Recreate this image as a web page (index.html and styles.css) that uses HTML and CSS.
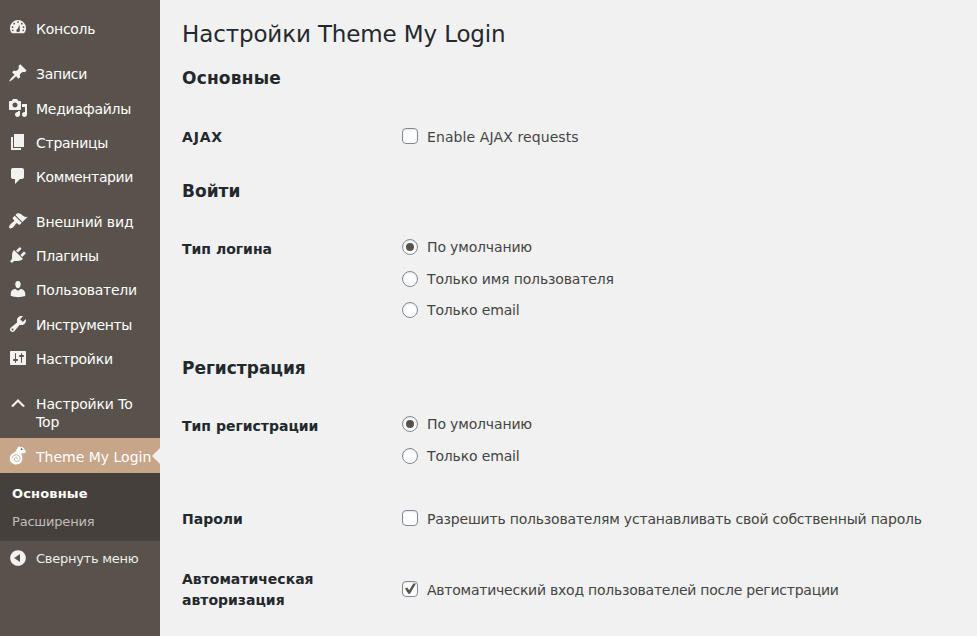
FILE: index.html
```html
<!DOCTYPE html>
<html lang="ru">
<head>
<meta charset="utf-8">
<title>Настройки Theme My Login</title>
<link rel="stylesheet" href="styles.css">
</head>
<body>
<div class="layout">
  <nav class="menu">
    <a class="item"><svg class="icon" viewBox="0 0 20 20"><path fill-rule="evenodd" d="M3.900 15.300h12.200A8 8 0 1 0 3.900 15.300zM10 3.200a.9.9 0 1 1 0 1.800.9.9 0 0 1 0-1.800zM6.200 4.800a.9.9 0 1 1 0 1.800.9.9 0 0 1 0-1.800zM13.800 4.800a.9.9 0 1 1 0 1.800.9.9 0 0 1 0-1.800zM4.500 8.300a.9.9 0 1 1 0 1.800.9.9 0 0 1 0-1.800zM15.500 8.300a.9.9 0 1 1 0 1.800.9.9 0 0 1 0-1.800zM4.800 11.600a.8.8 0 1 1 0 1.600.8.8 0 0 1 0-1.600zM15.200 11.600a.8.8 0 1 1 0 1.600.8.8 0 0 1 0-1.600zM11.500 6.500l.4 5.800c0 1.200-.8 1.900-1.800 1.900s-1.700-.8-1.700-1.700.6-1.400 1.400-1.700z"/></svg><span>Консоль</span></a>
    <div class="separator"></div>
    <a class="item"><svg class="icon" viewBox="0 0 20 20"><path d="M10.44 3.02l1.82-1.82 6.36 6.35-1.83 1.82c-1.05-.68-2.48-.57-3.41.36l-.75.75c-.92.93-1.04 2.35-.35 3.41l-1.83 1.82-2.41-2.41-2.8 2.79c-.42.42-3.38 2.71-3.8 2.29s1.86-3.39 2.28-3.81l2.79-2.79L4.1 9.36l1.83-1.82c1.05.69 2.48.57 3.4-.36l.75-.75c.93-.92 1.05-2.35.36-3.41z"/></svg><span>Записи</span></a>
    <a class="item"><svg class="icon" viewBox="0 0 20 20"><path d="M13 11V4c0-.55-.45-1-1-1h-1.67L9 1H5L3.67 3H2c-.55 0-1 .45-1 1v7c0 .55.45 1 1 1h10c.55 0 1-.45 1-1zM7 4.5c1.38 0 2.5 1.12 2.5 2.5S8.38 9.5 7 9.5 4.5 8.38 4.5 7 5.62 4.5 7 4.5zM14 6h5v10.5c0 1.38-1.12 2.5-2.5 2.5S14 17.88 14 16.5s1.12-2.5 2.5-2.5c.17 0 .34.02.5.05V9h-3V6zm-4 8.05V13h2v3.5c0 1.38-1.12 2.5-2.5 2.5S7 17.88 7 16.5 8.12 14 9.5 14c.17 0 .34.02.5.05z" fill-rule="evenodd"/></svg><span>Медиафайлы</span></a>
    <a class="item"><svg class="icon" viewBox="0 0 20 20"><path d="M6 15V2h10v13H6zm-1 1h8v2H3V5h2v11z"/></svg><span>Страницы</span></a>
    <a class="item"><svg class="icon" viewBox="0 0 20 20"><path d="M5 2h9c1.1 0 2 .9 2 2v7c0 1.1-.9 2-2 2h-2l-5 5v-5H5c-1.1 0-2-.9-2-2V4c0-1.1.9-2 2-2z"/></svg><span class="tight">Комментарии</span></a>
    <div class="separator"></div>
    <a class="item"><svg class="icon" viewBox="0 0 20 20"><path d="M14.48 11.06L7.41 3.99l1.5-1.5c.5-.56 2.3-.47 3.51.32 1.21.8 1.43 1.28 2.91 2.1 1.18.64 2.45 1.26 4.45.85zm-.71.71L6.7 4.7 4.93 6.47c-.39.39-.39 1.02 0 1.41l1.06 1.06c.39.39.39 1.03 0 1.42-.6.6-1.43 1.11-2.21 1.69-.35.26-.7.53-1.01.84C1.43 14.23.4 16.08 1.4 17.07c.99 1 2.84-.03 4.18-1.36.31-.31.58-.66.85-1.02.57-.78 1.08-1.61 1.69-2.21.39-.39 1.02-.39 1.41 0l1.06 1.06c.39.39 1.02.39 1.41 0z"/></svg><span class="loose">Внешний вид</span></a>
    <a class="item"><svg class="icon" viewBox="0 0 20 20"><path d="M13.11 4.36L9.87 7.6 8 5.73l3.24-3.24c.35-.34 1.05-.2 1.56.32.52.51.66 1.21.31 1.55zm-8 1.77l.91-1.12 9.01 9.01-1.19.84c-.71.71-2.63 1.16-3.82 1.16H6.14L4.9 17.26c-.59.59-1.54.59-2.12 0-.59-.58-.59-1.53 0-2.12l1.24-1.24v-3.88c0-1.13.4-3.19 1.09-3.89zm7.26 3.97l3.24-3.24c.34-.35 1.04-.21 1.55.31.52.51.66 1.21.31 1.55l-3.24 3.25z"/></svg><span>Плагины</span></a>
    <a class="item"><svg class="icon" viewBox="0 0 20 20"><path d="M10 9.25c-2.27 0-2.73-3.44-2.73-3.44C7 4.02 7.82 2 9.97 2c2.16 0 2.98 2.02 2.71 3.81 0 0-.41 3.44-2.68 3.44zm0 2.57L12.72 10c2.39 0 4.52 2.33 4.52 4.53v2.49s-3.65 1.13-7.24 1.13c-3.65 0-7.24-1.13-7.24-1.13v-2.49c0-2.25 1.94-4.48 4.47-4.48z"/></svg><span>Пользователи</span></a>
    <a class="item"><svg class="icon" viewBox="0 0 20 20"><path fill-rule="evenodd" d="M16.68 9.77c-1.34 1.34-3.3 1.67-4.95.99l-5.41 6.52c-.99.99-2.59.99-3.58 0s-.99-2.59 0-3.57l6.52-5.42c-.68-1.65-.35-3.61.99-4.95 1.28-1.28 3.12-1.62 4.72-1.06l-2.89 2.89 2.82 2.82 2.86-2.87c.53 1.58.18 3.39-1.08 4.65zM3.81 16.21c.4.39 1.04.39 1.43 0 .4-.4.4-1.04 0-1.43-.39-.4-1.03-.4-1.43 0-.39.39-.39 1.03 0 1.43z"/></svg><span class="tight">Инструменты</span></a>
    <a class="item"><svg class="icon" viewBox="0 0 20 20"><path fill-rule="evenodd" d="M18 16V4c0-.55-.45-1-1-1H3c-.55 0-1 .45-1 1v12c0 .55.45 1 1 1h14c.55 0 1-.45 1-1zM8 11h1c.55 0 1 .45 1 1s-.45 1-1 1H8v1.5c0 .28-.22.5-.5.5s-.5-.22-.5-.5V13H6c-.55 0-1-.45-1-1s.45-1 1-1h1V5.5c0-.28.22-.5.5-.5s.5.22.5.5V11zm5-2h-1c-.55 0-1-.45-1-1s.45-1 1-1h1V5.5c0-.28.22-.5.5-.5s.5.22.5.5V7h1c.55 0 1 .45 1 1s-.45 1-1 1h-1v5.5c0 .28-.22.5-.5.5s-.5-.22-.5-.5V9z"/></svg><span>Настройки</span></a>
    <div class="separator"></div>
    <a class="item"><svg class="icon" viewBox="0 0 20 20"><path d="M15 14l-5-5-5 5-2-1 7-7 7 7z"/></svg><span class="loose">Настройки To Top</span></a>
    <a class="item current"><svg class="icon" viewBox="0 0 20 20"><path d="M9.800 1.200l1.700-.9 1.200.7c1.600-.1 3 .5 3.600 2.100L18 5.600l-.8 1.300-4.300.8c1 1.200 1.500 2.800 1.500 4.600 0 3.500-2.500 6.200-6.200 6.200-3.600 0-6.400-2.400-6.400-6C1.800 7.700 6.300 7.200 8.200 4.600z"/><path class="spiral" d="M4.300 12.200c.2-2.200 2-3.500 4-3.400 2.300.1 3.700 1.700 3.600 3.700-.1 1.900-1.500 3.100-3.300 3-1.500-.1-2.400-1.100-2.300-2.400.1-1.200 1-1.800 2-1.700.9.1 1.300.8 1.100 1.500"/><circle class="eye" cx="13.600" cy="3.200" r=".9"/></svg><span>Theme My Login</span></a>
    <div class="submenu"><a class="sub active">Основные</a><a class="sub">Расширения</a></div>
    <a class="item collapse"><svg class="icon" viewBox="0 0 20 20"><path fill-rule="evenodd" d="M10 2.160c4.330 0 7.840 3.510 7.840 7.840s-3.510 7.840-7.840 7.840S2.160 14.330 2.160 10 5.710 2.160 10 2.160zm2 11.720V6.120L6.180 9.970z"/></svg><span>Свернуть меню</span></a>
  </nav>
  <main class="content">
    <h1>Настройки Theme My Login</h1>
    <h2 class="wide">Основные</h2>
    <div class="form first">
      <div class="row"><div class="label latin">AJAX</div><div class="field"><label class="latin-text"><input type="checkbox"><span>Enable AJAX requests</span></label></div></div>
    </div>
    <h2>Войти</h2>
    <div class="form">
      <div class="row"><div class="label">Тип логина</div><div class="field radios"><label><input type="radio" name="login" checked><span>По умолчанию</span></label><label><input type="radio" name="login"><span>Только имя пользователя</span></label><label><input type="radio" name="login"><span>Только email</span></label></div></div>
    </div>
    <h2>Регистрация</h2>
    <div class="form">
      <div class="row"><div class="label">Тип регистрации</div><div class="field radios"><label><input type="radio" name="reg" checked><span>По умолчанию</span></label><label><input type="radio" name="reg"><span>Только email</span></label></div></div>
      <div class="row"><div class="label">Пароли</div><div class="field"><label class="long"><input type="checkbox"><span>Разрешить пользователям устанавливать свой собственный пароль</span></label></div></div>
      <div class="row"><div class="label">Автоматическая авторизация</div><div class="field middle"><label class="long"><input type="checkbox" checked><span>Автоматический вход пользователей после регистрации</span></label></div></div>
    </div>
  </main>
</div>
</body>
</html>
```
FILE: styles.css
```css
* { box-sizing: border-box; }
body {
  margin: 0;
  background: #f1f1f1;
  color: #444;
  font: 14px/1.3 "DejaVu Sans", sans-serif;
  overflow: hidden;
}
.layout { display: flex; height: 636px; }

.menu { width: 160px; flex: none; padding-top: 11.15px; background: #59524c; }
.item { display: flex; position: relative; color: #fff; }
.item span { flex: 1; padding: 9px 0 7px; letter-spacing: -.26px; }
.item .tight { letter-spacing: -.38px; }
.item .loose { letter-spacing: -.14px; }
.icon { width: 20px; height: 20px; flex: none; margin: 7px 8px 0; fill: #f3f2f1; }
.separator { height: 11px; }
.current { height: 35px; background: #c7a589; }
.current span { padding-top: 9.6px; white-space: nowrap; letter-spacing: 0; }
.current .icon { margin-top: 8px; fill: #fff; }
.current::after {
  content: "";
  position: absolute;
  right: 0;
  top: 10px;
  border: 8px solid transparent;
  border-right-color: #f1f1f1;
}
.spiral { fill: none; stroke: #c7a589; stroke-width: .9; }
.eye { fill: #59524c; }
.submenu { background: #46403c; padding: 7px 0 5px; }
.sub { display: block; padding: 5px 12px; font-size: 13px; line-height: 18px; letter-spacing: -.2px; color: #cdcbc9; opacity: .9; }
.sub.active { color: #fff; font-weight: 700; letter-spacing: .15px; opacity: 1; }
.collapse { color: #eee; font-size: 13px; line-height: 18px; }

.content { padding: 0 0 0 22px; flex: 1; }
h1 { margin: 0; padding: 19px 0 0; font-size: 23px; font-weight: 400; line-height: 30px; letter-spacing: -.13px; color: #23282d; }
h2 { margin: 0; font-size: 17px; line-height: 23px; color: #23282d; }
.wide { letter-spacing: .2px; }
h1 + h2 { margin-top: 18px; }
.form { margin: 15px 0 14.5px; }
.first { margin: 16px 0 14px; }
.row { display: grid; grid-template-columns: 220px 1fr; }
.label { padding: 21px 10px 18px 0; font-weight: 700; line-height: 21px; color: #23282d; }
.latin { letter-spacing: .8px; }
.field { padding: 18px 0; }
.field label { display: flex; align-items: flex-start; height: 24px; line-height: 24px; letter-spacing: -.15px; }
.field label span { padding-top: 1px; }
.field .latin-text { letter-spacing: .1px; }
.field .long { letter-spacing: -.2px; }
.middle { align-self: center; }
.middle .long { letter-spacing: -.24px; }
.radios { display: flex; flex-direction: column; gap: 7.5px; padding: 17px 0 20.5px; }
.radios label span { padding-top: 0; }
input {
  appearance: none;
  width: 16px;
  height: 16px;
  margin: 4px 9px 0 0;
  border: 1px solid #7e8993;
  border-radius: 4px;
  background: #fff;
  box-shadow: inset 0 1px 2px rgba(0, 0, 0, .1);
}
input[type="radio"] { border-radius: 50%; display: grid; place-items: center; }
input[type="radio"]:checked::before { content: ""; width: 8px; height: 8px; border-radius: 50%; background: #59524c; }
input[type="checkbox"]:checked { display: grid; place-items: center; }
input[type="checkbox"]:checked::before {
  content: "";
  width: 12px;
  height: 12px;
  background: #59524c;
  clip-path: polygon(8% 50%, 27% 42%, 43% 64%, 78% 8%, 100% 8%, 50% 94%, 36% 94%);
}
```
